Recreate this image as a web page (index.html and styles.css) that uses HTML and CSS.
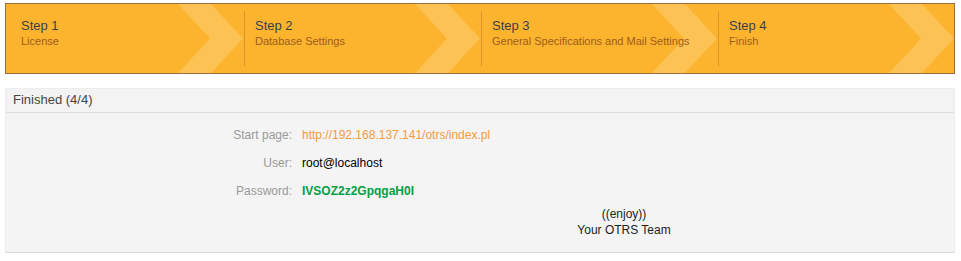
FILE: index.html
```html
<!DOCTYPE html>
<html>
<head>
<meta charset="utf-8">
<link rel="stylesheet" href="styles.css">
</head>
<body>
<ul class="steps">
  <li class="step first"><div class="step-body"><div class="step-title">Step 1</div><div class="step-sub">License</div></div></li>
  <li class="step"><div class="step-body"><div class="step-title">Step 2</div><div class="step-sub">Database Settings</div></div></li>
  <li class="step"><div class="step-body"><div class="step-title">Step 3</div><div class="step-sub">General Specifications and Mail Settings</div></div></li>
  <li class="step"><div class="step-body"><div class="step-title">Step 4</div><div class="step-sub">Finish</div></div></li>
</ul>
<div class="panel">
  <div class="panel-header">Finished (4/4)</div>
  <div class="panel-body">
    <div class="fields">
      <div class="label">Start page:</div>
      <div class="value link">http://192.168.137.141/otrs/index.pl</div>
      <div class="label">User:</div>
      <div class="value">root@localhost</div>
      <div class="label">Password:</div>
      <div class="value password">IVSOZ2z2GpqgaH0I</div>
    </div>
    <div class="enjoy">
      <div>((enjoy))</div>
      <div>Your OTRS Team</div>
    </div>
  </div>
</div>
</body>
</html>
```
FILE: styles.css
```css
html, body {
  margin: 0;
  padding: 0;
  background: #fff;
  font-family: "Liberation Sans", Arial, sans-serif;
}

.steps {
  list-style: none;
  margin: 3px 0 0 5px;
  padding: 0;
  width: 948px;
  height: 69px;
  border: 1px solid #9e6b3c;
  background: #fcb32e;
  display: flex;
}

.step {
  position: relative;
  width: 237px;
  flex: none;
  overflow: hidden;
}

.step::after {
  content: "";
  position: absolute;
  right: 0;
  top: 0;
  width: 65px;
  height: 100%;
  background: #fcc254;
  clip-path: polygon(0 0, 33px 0, 100% 50%, 33px 100%, 0 100%, 32px 50%);
}

.step-body {
  position: relative;
  z-index: 1;
  margin: 7px 0 0 1px;
  height: 55px;
  border-left: 1px solid #d9952b;
  padding: 6px 0 0 10px;
  box-sizing: border-box;
}

.first .step-body {
  border-left: none;
  margin-left: 0;
  padding-left: 15px;
}

.step-title {
  font-size: 13px;
  line-height: 18px;
  color: #3a3a3a;
  text-shadow: 0 0 1px rgba(255, 230, 160, 0.5);
}

.step-sub {
  font-size: 11px;
  line-height: 13px;
  color: #9c5e1c;
  white-space: nowrap;
}

.panel {
  margin: 14px 0 0 5px;
  width: 948px;
  background: #f4f4f4;
  border: 1px solid #ececec;
  border-bottom-color: #dcdcdc;
}

.panel-header {
  height: 23px;
  line-height: 22px;
  padding: 0 7px;
  font-size: 13px;
  color: #444;
  border-bottom: 1px solid #dddddd;
  background: #f3f3f3;
}

.panel-body {
  padding: 14px 0 14px;
  font-size: 12px;
}

.fields {
  display: grid;
  grid-template-columns: 286px 1fr;
  column-gap: 10px;
  row-gap: 12px;
  line-height: 16px;
}

.label {
  text-align: right;
  color: #999;
}

.value {
  color: #000;
}

.link {
  color: #f7993d;
}

.password {
  color: #03a043;
  font-weight: bold;
}

.enjoy {
  margin: 7px 0 0 296px;
  padding-right: 8px;
  text-align: center;
  line-height: 16px;
  color: #222;
}
```
